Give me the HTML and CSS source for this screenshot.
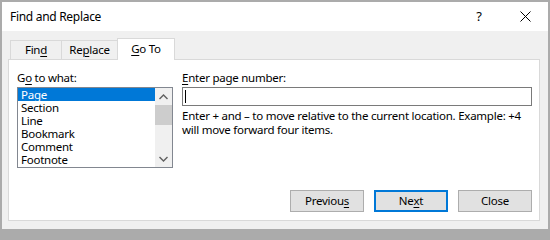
FILE: index.html
```html
<!DOCTYPE html>
<html>
<head>
<meta charset="utf-8">
<link rel="stylesheet" href="styles.css">
</head>
<body>
<div class="window">
  <div class="titlebar">
    <span class="title">Find and Replace</span>
    <div class="tbtns">
      <span class="tbtn help">?</span>
      <span class="tbtn close"><svg width="11" height="11" viewBox="0 0 11 11"><path d="M0.5 0.5 L10.5 10.5 M10.5 0.5 L0.5 10.5" stroke="#000" stroke-width="1" fill="none"/></svg></span>
    </div>
  </div>
  <div class="content">
    <div class="tabs">
      <div class="tab">Fin<u>d</u></div>
      <div class="tab">Re<u>p</u>lace</div>
      <div class="tab active"><u>G</u>o To</div>
    </div>
    <div class="panel">
      <div class="cols">
        <div class="col left">
          <div class="label">G<u>o</u> to what:</div>
          <div class="listbox">
            <ul class="items">
              <li class="sel">Page</li>
              <li>Section</li>
              <li>Line</li>
              <li>Bookmark</li>
              <li>Comment</li>
              <li>Footnote</li>
            </ul>
            <div class="scroll">
              <div class="arrow"><svg width="9" height="6" viewBox="0 0 9 6"><path d="M0.5 5 L4.5 1 L8.5 5" stroke="#606060" stroke-width="1.4" fill="none"/></svg></div>
              <div class="thumb"></div>
              <div class="track"></div>
              <div class="arrow"><svg width="9" height="6" viewBox="0 0 9 6"><path d="M0.5 1 L4.5 5 L8.5 1" stroke="#606060" stroke-width="1.4" fill="none"/></svg></div>
            </div>
          </div>
        </div>
        <div class="col right">
          <div class="label"><u>E</u>nter page number:</div>
          <div class="input"><span class="caret"></span></div>
          <p class="help-text">Enter + and – to move relative to the current location. Example: +4 will move forward four items.</p>
        </div>
      </div>
      <div class="buttons">
        <div class="btn">Previou<u>s</u></div>
        <div class="btn default">Ne<u>x</u>t</div>
        <div class="btn">Close</div>
      </div>
    </div>
  </div>
</div>
</body>
</html>
```
FILE: styles.css
```css
* { box-sizing: border-box; }
html, body { margin: 0; padding: 0; background: #ababab; }
body { font-family: "Noto Sans", "Open Sans", sans-serif; font-size: 11.5px; letter-spacing: -0.25px; color: #000; }
u { text-decoration: underline; text-underline-offset: 2px; text-decoration-thickness: 1px; }

.window {
  width: 550px; height: 231px;
  border: 2px solid #ababab;
  display: flex; flex-direction: column;
  background: #f0f0f0;
}
.titlebar {
  height: 29px; background: #fff;
  display: flex; align-items: center; justify-content: space-between;
  padding-left: 8px;
}
.title { font-size: 12px; letter-spacing: -0.3px; line-height: 16px; }
.tbtns { display: flex; height: 100%; }
.tbtn { width: 46px; display: flex; align-items: center; justify-content: center; }
.help { font-size: 13px; padding-bottom: 1px; }
.close svg { display: block; margin-top: -1px; }

.content { flex: 1; padding: 7px 8px 8px 6px; display: flex; flex-direction: column; }
.tabs { display: flex; align-items: flex-end; margin-left: 2px; height: 21px; position: relative; z-index: 1; }
.tab {
  height: 19px; border: 1px solid #d9d9d9; border-bottom: none;
  background: #f0f0f0; display: flex; align-items: center; justify-content: center;
  line-height: 14px;
}
.tab:nth-child(1) { width: 52px; }
.tab:nth-child(2) { width: 57px; margin-left: -1px; }
.tab.active { width: 58px; height: 22px; margin-left: -1px; margin-bottom: -1px; background: #fff; padding-bottom: 2px; }

.panel {
  flex: 1; background: #fff; border: 1px solid #d9d9d9;
  padding: 11px 7px 8px 8px;
  display: flex; flex-direction: column;
}
.cols { display: flex; gap: 9px; }
.col.left { width: 156px; }
.col.right { flex: 1; }
.label { line-height: 14px; height: 15px; margin-bottom: 1px; }

.listbox { height: 81px; border: 1px solid #828790; display: flex; }
.items { list-style: none; margin: 0; padding: 0; flex: 1; }
.items li { height: 13px; line-height: 13px; padding-left: 3px; }
.items li.sel { background: #0078d7; color: #fff; }
.scroll { width: 17px; background: #f0f0f0; display: flex; flex-direction: column; }
.arrow { height: 17px; display: flex; align-items: center; justify-content: center; }
.arrow svg { display: block; }
.thumb { height: 20px; background: #cdcdcd; }
.track { flex: 1; }

.input { height: 19px; border: 1px solid #7a7a7a; padding: 2px 2px; }
.caret { display: block; width: 1px; height: 13px; background: #000; }
.help-text { margin: 3px 0 0 0; line-height: 14px; }

.buttons { margin-top: auto; display: flex; justify-content: flex-end; gap: 10px; }
.btn {
  width: 74px; height: 22px; background: #e1e1e1; border: 1px solid #adadad;
  display: flex; align-items: center; justify-content: center; line-height: 14px;
}
.btn.default { border: 2px solid #0078d7; }
```
